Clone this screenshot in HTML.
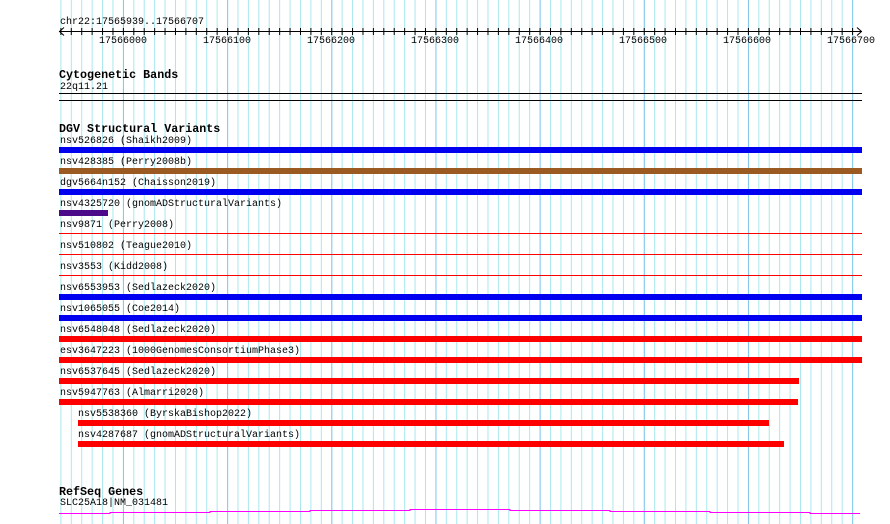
<!DOCTYPE html>
<html><head><meta charset="utf-8"><style>
html,body{margin:0;padding:0;background:#fff;width:890px;height:524px;overflow:hidden;position:relative}
.t{position:absolute;font-family:"Liberation Mono","DejaVu Sans Mono",monospace;font-size:10px;line-height:10px;color:#000;white-space:pre}
.b{font-weight:bold;font-size:11.7px;line-height:12px}
.bar{position:absolute;height:6px}
.ln{position:absolute;height:1px;background:#f00}
svg{position:absolute;left:0;top:0}
</style></head><body>
<svg width="890" height="524">
<defs>
<pattern id="mn" patternUnits="userSpaceOnUse" x="8.3" y="0" width="10.417" height="524"><rect x="0" y="0" width="1" height="524" fill="#a8e8ee"/></pattern>
<pattern id="mj" patternUnits="userSpaceOnUse" x="18.8" y="0" width="104.17" height="524"><rect x="0" y="0" width="1" height="524" fill="#84c8ec"/></pattern>
<pattern id="tk" patternUnits="userSpaceOnUse" x="8.3" y="28" width="10.417" height="7"><rect x="0" y="0" width="1" height="7" fill="#000"/></pattern>
</defs>
<rect x="60" y="0" width="794" height="524" fill="url(#mn)"/>
<rect x="60" y="0" width="794" height="524" fill="url(#mj)"/>
<rect x="59" y="28" width="795" height="7" fill="url(#tk)"/>
<line x1="59" y1="31.5" x2="862" y2="31.5" stroke="#000"/>
<polyline points="64,27.5 59.5,31.5 64,35.5" fill="none" stroke="#000"/>
<polyline points="857,27.5 861.5,31.5 857,35.5" fill="none" stroke="#000"/>
<line x1="59" y1="93.5" x2="862" y2="93.5" stroke="#000"/>
<line x1="59" y1="100.5" x2="862" y2="100.5" stroke="#000"/>
<polyline fill="none" stroke="#f0f" stroke-width="1" points="59,513.5 110,513.5 110,512.5 210,512.5 210,511.5 310,511.5 310,510.5 410,510.5 410,509.5 510,509.5 510,510.5 610,510.5 610,511.5 710,511.5 710,512.5 810,512.5 810,513.5 860,513.5"/>
</svg>
<div class="t" style="left:60px;top:18px">chr22:17565939..17566707</div>
<div class="t" style="left:99px;top:37px">17566000</div>
<div class="t" style="left:203px;top:37px">17566100</div>
<div class="t" style="left:307px;top:37px">17566200</div>
<div class="t" style="left:411px;top:37px">17566300</div>
<div class="t" style="left:515px;top:37px">17566400</div>
<div class="t" style="left:619px;top:37px">17566500</div>
<div class="t" style="left:723px;top:37px">17566600</div>
<div class="t" style="left:827px;top:37px">17566700</div>
<div class="t b" style="left:59px;top:69px">Cytogenetic Bands</div>
<div class="t" style="left:60px;top:83px">22q11.21</div>
<div class="t b" style="left:59px;top:123px">DGV Structural Variants</div>
<div class="t" style="left:60px;top:137px">nsv526826 (Shaikh2009)</div>
<div class="bar" style="left:59px;top:147px;width:803px;background:#0000f0"></div>
<div class="t" style="left:60px;top:158px">nsv428385 (Perry2008b)</div>
<div class="bar" style="left:59px;top:168px;width:803px;background:#9a5a22"></div>
<div class="t" style="left:60px;top:179px">dgv5664n152 (Chaisson2019)</div>
<div class="bar" style="left:59px;top:189px;width:803px;background:#0000f0"></div>
<div class="t" style="left:60px;top:200px">nsv4325720 (gnomADStructuralVariants)</div>
<div class="bar" style="left:59px;top:210px;width:49px;background:#4b0a8a"></div>
<div class="t" style="left:60px;top:221px">nsv9871 (Perry2008)</div>
<div class="ln" style="left:59px;top:233px;width:803px"></div>
<div class="t" style="left:60px;top:242px">nsv510802 (Teague2010)</div>
<div class="ln" style="left:59px;top:254px;width:803px"></div>
<div class="t" style="left:60px;top:263px">nsv3553 (Kidd2008)</div>
<div class="ln" style="left:59px;top:275px;width:803px"></div>
<div class="t" style="left:60px;top:284px">nsv6553953 (Sedlazeck2020)</div>
<div class="bar" style="left:59px;top:294px;width:803px;background:#0000f0"></div>
<div class="t" style="left:60px;top:305px">nsv1065055 (Coe2014)</div>
<div class="bar" style="left:59px;top:315px;width:803px;background:#0000f0"></div>
<div class="t" style="left:60px;top:326px">nsv6548048 (Sedlazeck2020)</div>
<div class="bar" style="left:59px;top:336px;width:803px;background:#f00"></div>
<div class="t" style="left:60px;top:347px">esv3647223 (1000GenomesConsortiumPhase3)</div>
<div class="bar" style="left:59px;top:357px;width:803px;background:#f00"></div>
<div class="t" style="left:60px;top:368px">nsv6537645 (Sedlazeck2020)</div>
<div class="bar" style="left:59px;top:378px;width:740px;background:#f00"></div>
<div class="t" style="left:60px;top:389px">nsv5947763 (Almarri2020)</div>
<div class="bar" style="left:59px;top:399px;width:739px;background:#f00"></div>
<div class="t" style="left:78px;top:410px">nsv5538360 (ByrskaBishop2022)</div>
<div class="bar" style="left:78px;top:420px;width:691px;background:#f00"></div>
<div class="t" style="left:78px;top:431px">nsv4287687 (gnomADStructuralVariants)</div>
<div class="bar" style="left:78px;top:441px;width:706px;background:#f00"></div>
<div class="t b" style="left:59px;top:486px">RefSeq Genes</div>
<div class="t" style="left:60px;top:499px">SLC25A18|NM_031481</div>
</body></html>
